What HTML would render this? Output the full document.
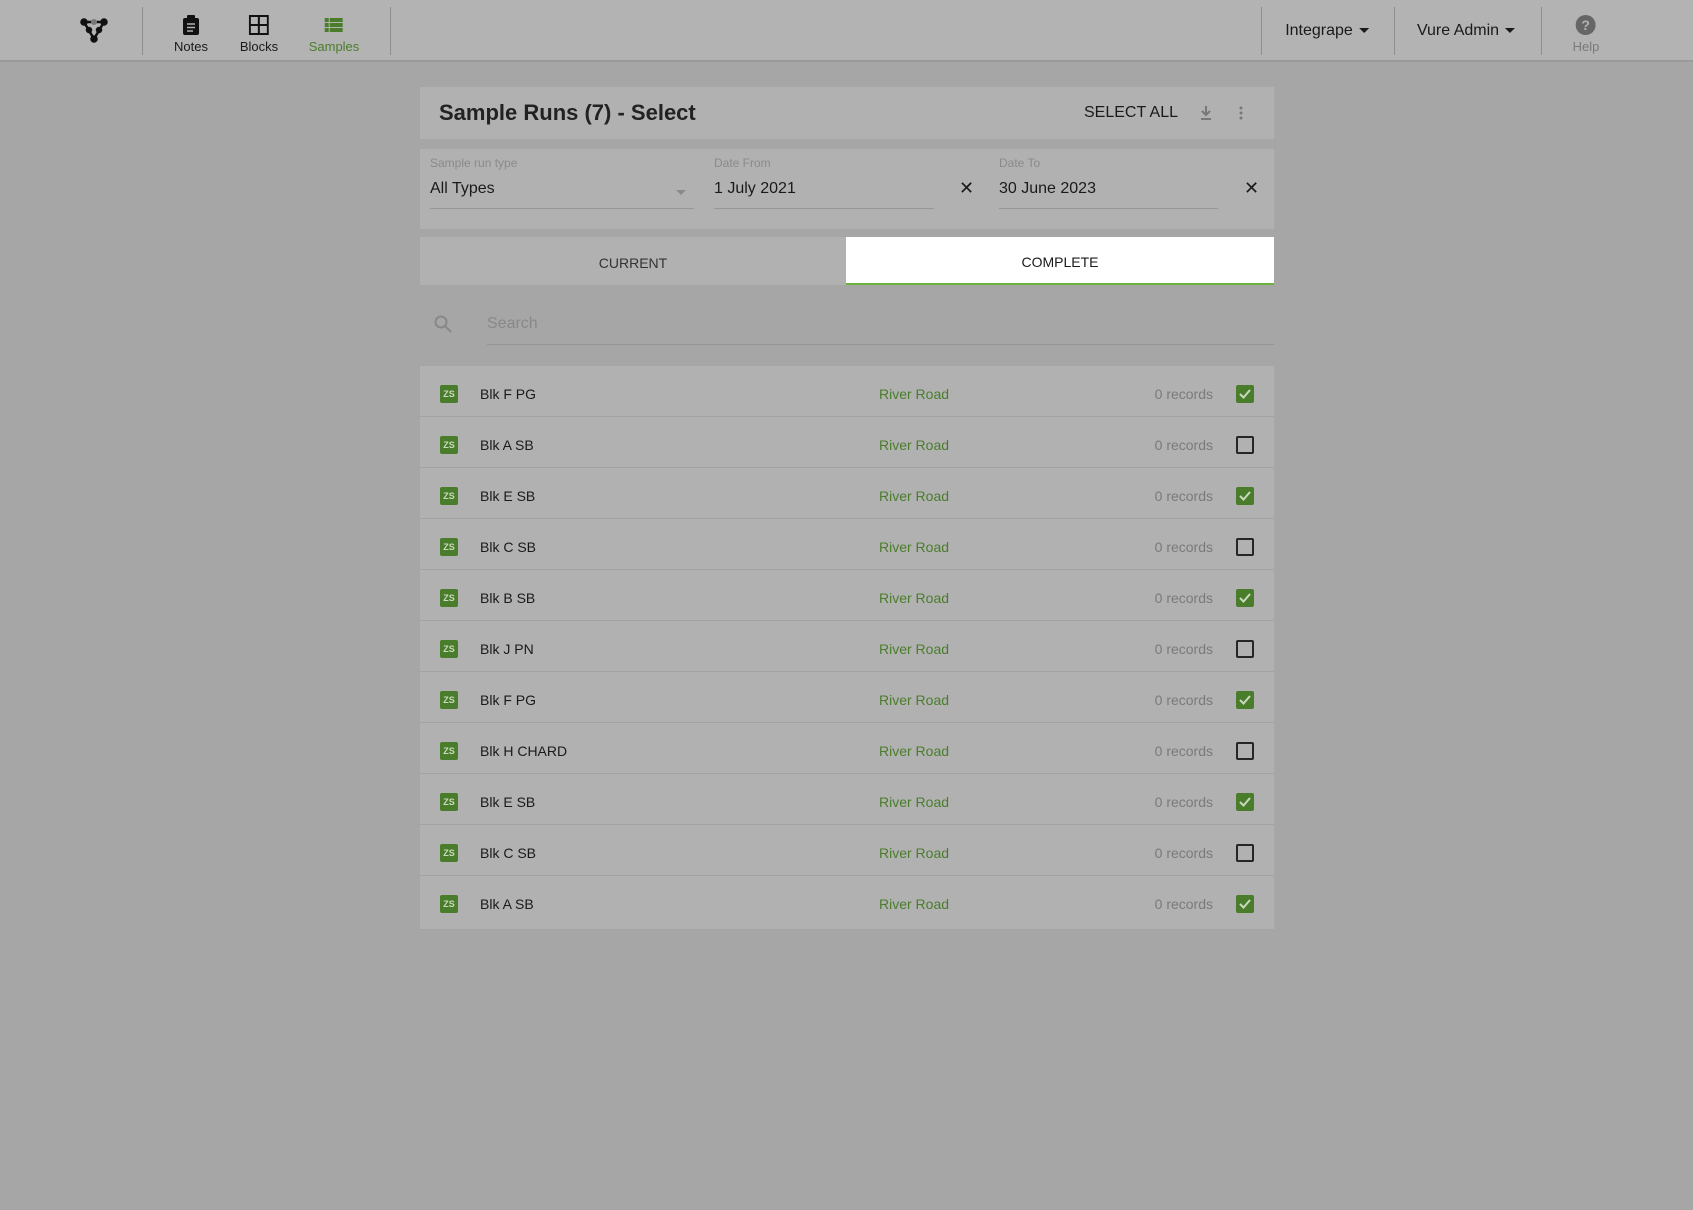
<!DOCTYPE html>
<html><head><meta charset="utf-8"><style>
*{box-sizing:border-box;margin:0;padding:0}
body{width:1693px;height:1210px;background:#a6a6a6;font-family:"Liberation Sans",sans-serif;position:relative;overflow:hidden;color:#1a1a1a}
div{white-space:nowrap}
.nav{position:absolute;left:0;top:0;width:1693px;height:62px;background:#b3b3b3;border-bottom:2px solid #9a9a9a}
.vd{position:absolute;top:7px;height:48px;width:1px;background:#8e8e8e}
.ni{position:absolute;top:15px;text-align:center;font-size:13px;transform:translateX(-50%)}
.ni svg{display:block;margin:0 auto 4px}
.dd{position:absolute;top:22px;font-size:16px;transform:translateX(-50%)}
.dd:after{content:"";display:inline-block;margin-left:6px;vertical-align:middle;border-left:5px solid transparent;border-right:5px solid transparent;border-top:5px solid #1a1a1a}
.card{position:absolute;left:420px;width:854px;background:#b1b1b1}
.lbl{position:absolute;top:156px;font-size:12px;color:#8a8a8a}
.val{position:absolute;top:180px;font-size:16px}
.ul{position:absolute;top:208px;height:1px;background:#979797}
.x{position:absolute;top:178px;font-size:18px}
.row{position:absolute;left:420px;width:854px;height:51px;background:#b1b1b1;border-bottom:1px solid #a3a3a3}
.zs{position:absolute;left:440px;width:18px;height:18px;background:#4a7d2b;color:#c9d9bd;font-size:9px;font-weight:bold;text-align:center;line-height:18px;border-radius:2px}
.nm{position:absolute;left:480px;font-size:14px;margin-top:1px}
.rr{position:absolute;left:879px;font-size:14px;color:#4a7d2b}
.rc{position:absolute;right:480px;font-size:14px;color:#7a7a7a}
.cb{position:absolute;left:1236px;width:18px;height:18px;border:2px solid #262626;border-radius:2px}
.cb.on{background:#4a7d2b;border-color:#4a7d2b}
.w{position:absolute;left:0;top:0;width:1693px;height:1210px}
</style></head><body>
<div class="nav">
<svg style="position:absolute;left:80px;top:17px" width="28" height="26" viewBox="0 0 28 26"><g stroke="#111" stroke-width="2.5" fill="#111"><line x1="4" y1="5" x2="14" y2="5"/><line x1="14" y1="5" x2="24" y2="5"/><line x1="4" y1="5" x2="14" y2="22"/><line x1="24" y1="5" x2="14" y2="22"/><circle cx="4" cy="5" r="2.5"/><circle cx="24" cy="5" r="2.5"/><circle cx="14" cy="22" r="2.5"/><circle cx="9" cy="13" r="2"/><circle cx="19" cy="13" r="2"/></g><circle cx="14" cy="5" r="3" fill="#777"/></svg>
<div class="vd" style="left:142px"></div>
<div class="ni" style="left:191px"><svg width="18" height="20" viewBox="0 0 18 20"><rect x="1" y="3" width="16" height="17" rx="2" fill="#111"/><rect x="5" y="0" width="8" height="5" rx="1" fill="#111"/><g stroke="#b3b3b3" stroke-width="1.5"><line x1="5" y1="9" x2="13" y2="9"/><line x1="5" y1="12.5" x2="13" y2="12.5"/><line x1="5" y1="16" x2="11" y2="16"/></g></svg>Notes</div>
<div class="ni" style="left:259px"><svg width="20" height="20" viewBox="0 0 20 20"><g fill="none" stroke="#111" stroke-width="2"><rect x="1" y="1" width="18" height="18"/><line x1="10" y1="1" x2="10" y2="19"/><line x1="1" y1="10" x2="19" y2="10"/></g></svg>Blocks</div>
<div class="ni" style="left:334px;color:#4a7d2b"><svg width="20" height="20" viewBox="0 0 20 20"><g fill="#4a7d2b"><rect x="1" y="3" width="4" height="4"/><rect x="6" y="3" width="13" height="4"/><rect x="1" y="8" width="4" height="4"/><rect x="6" y="8" width="13" height="4"/><rect x="1" y="13" width="4" height="4"/><rect x="6" y="13" width="13" height="4"/></g></svg>Samples</div>
<div class="vd" style="left:390px"></div>
<div class="vd" style="left:1261px"></div>
<div class="dd" style="left:1327px">Integrape</div>
<div class="vd" style="left:1394px"></div>
<div class="dd" style="left:1466px">Vure Admin</div>
<div class="vd" style="left:1541px"></div>
<div class="ni" style="left:1586px;color:#7a7a7a"><svg width="20" height="20" viewBox="0 0 20 20"><circle cx="10" cy="10" r="10" fill="#666"/><text x="10" y="15" font-size="14" font-weight="bold" text-anchor="middle" fill="#b3b3b3" font-family="Liberation Sans">?</text></svg>Help</div>
</div>

<div class="card" style="top:87px;height:52px"></div>
<div style="position:absolute;left:439px;top:100px;font-size:22px;font-weight:bold;color:#222">Sample Runs (7) - Select</div>
<div style="position:absolute;left:1084px;top:104px;font-size:16px">SELECT ALL</div>
<svg style="position:absolute;left:1199px;top:105px" width="14" height="16" viewBox="0 0 14 16"><path d="M7 1v9M3 6l4 4 4-4" stroke="#777" stroke-width="2" fill="none"/><line x1="2" y1="14" x2="12" y2="14" stroke="#777" stroke-width="2"/></svg>
<svg style="position:absolute;left:1238px;top:105px" width="6" height="16"><circle cx="3" cy="3" r="1.5" fill="#777"/><circle cx="3" cy="8" r="1.5" fill="#777"/><circle cx="3" cy="13" r="1.5" fill="#777"/></svg>

<div class="card" style="top:149px;height:80px"></div>
<div class="lbl" style="left:430px">Sample run type</div>
<div class="val" style="left:430px">All Types</div>
<div style="position:absolute;left:676px;top:190px;border-left:5px solid transparent;border-right:5px solid transparent;border-top:5px solid #8a8a8a"></div>
<div class="ul" style="left:430px;width:264px"></div>
<div class="lbl" style="left:714px">Date From</div>
<div class="val" style="left:714px">1 July 2021</div>
<div class="ul" style="left:714px;width:220px"></div>
<div class="x" style="left:959px">✕</div>
<div class="lbl" style="left:999px">Date To</div>
<div class="val" style="left:999px">30 June 2023</div>
<div class="ul" style="left:999px;width:219px"></div>
<div class="x" style="left:1244px">✕</div>

<div class="card" style="top:237px;height:48px;width:426px"></div>
<div style="position:absolute;left:420px;top:255px;width:426px;text-align:center;font-size:14px;color:#333">CURRENT</div>
<div style="position:absolute;left:846px;top:237px;width:428px;height:48px;background:#fff;border-bottom:2px solid #6ab23a;text-align:center;font-size:14px;padding-top:17px">COMPLETE</div>

<svg style="position:absolute;left:434px;top:315px" width="18" height="18" viewBox="0 0 18 18"><circle cx="7" cy="7" r="5.5" stroke="#888" stroke-width="2" fill="none"/><line x1="11" y1="11" x2="17" y2="17" stroke="#888" stroke-width="2"/></svg>
<div style="position:absolute;left:487px;top:315px;font-size:16px;color:#888">Search</div>
<div style="position:absolute;left:487px;top:344px;width:787px;height:1px;background:#959595"></div>

<div class="row" style="top:366px"></div><div class="row" style="top:417px"></div><div class="row" style="top:468px"></div><div class="row" style="top:519px"></div><div class="row" style="top:570px"></div><div class="row" style="top:621px"></div><div class="row" style="top:672px"></div><div class="row" style="top:723px"></div><div class="row" style="top:774px"></div><div class="row" style="top:825px"></div><div class="row" style="top:876px;height:54px"></div>

<div class="w">
<div class="zs" style="top:385px">ZS</div><div class="nm" style="top:385px">Blk F PG</div><div class="rr" style="top:386px">River Road</div><div class="rc" style="top:386px">0 records</div><div class="cb on" style="top:385px"><svg width="14" height="14" viewBox="0 0 14 14"><path d="M2 7l3.5 3.5L12 3" stroke="#c9d9bd" stroke-width="2" fill="none"/></svg></div>
<div class="zs" style="top:436px">ZS</div><div class="nm" style="top:436px">Blk A SB</div><div class="rr" style="top:437px">River Road</div><div class="rc" style="top:437px">0 records</div><div class="cb" style="top:436px"></div>
<div class="zs" style="top:487px">ZS</div><div class="nm" style="top:487px">Blk E SB</div><div class="rr" style="top:488px">River Road</div><div class="rc" style="top:488px">0 records</div><div class="cb on" style="top:487px"><svg width="14" height="14" viewBox="0 0 14 14"><path d="M2 7l3.5 3.5L12 3" stroke="#c9d9bd" stroke-width="2" fill="none"/></svg></div>
<div class="zs" style="top:538px">ZS</div><div class="nm" style="top:538px">Blk C SB</div><div class="rr" style="top:539px">River Road</div><div class="rc" style="top:539px">0 records</div><div class="cb" style="top:538px"></div>
<div class="zs" style="top:589px">ZS</div><div class="nm" style="top:589px">Blk B SB</div><div class="rr" style="top:590px">River Road</div><div class="rc" style="top:590px">0 records</div><div class="cb on" style="top:589px"><svg width="14" height="14" viewBox="0 0 14 14"><path d="M2 7l3.5 3.5L12 3" stroke="#c9d9bd" stroke-width="2" fill="none"/></svg></div>
<div class="zs" style="top:640px">ZS</div><div class="nm" style="top:640px">Blk J PN</div><div class="rr" style="top:641px">River Road</div><div class="rc" style="top:641px">0 records</div><div class="cb" style="top:640px"></div>
<div class="zs" style="top:691px">ZS</div><div class="nm" style="top:691px">Blk F PG</div><div class="rr" style="top:692px">River Road</div><div class="rc" style="top:692px">0 records</div><div class="cb on" style="top:691px"><svg width="14" height="14" viewBox="0 0 14 14"><path d="M2 7l3.5 3.5L12 3" stroke="#c9d9bd" stroke-width="2" fill="none"/></svg></div>
<div class="zs" style="top:742px">ZS</div><div class="nm" style="top:742px">Blk H CHARD</div><div class="rr" style="top:743px">River Road</div><div class="rc" style="top:743px">0 records</div><div class="cb" style="top:742px"></div>
<div class="zs" style="top:793px">ZS</div><div class="nm" style="top:793px">Blk E SB</div><div class="rr" style="top:794px">River Road</div><div class="rc" style="top:794px">0 records</div><div class="cb on" style="top:793px"><svg width="14" height="14" viewBox="0 0 14 14"><path d="M2 7l3.5 3.5L12 3" stroke="#c9d9bd" stroke-width="2" fill="none"/></svg></div>
<div class="zs" style="top:844px">ZS</div><div class="nm" style="top:844px">Blk C SB</div><div class="rr" style="top:845px">River Road</div><div class="rc" style="top:845px">0 records</div><div class="cb" style="top:844px"></div>
<div class="zs" style="top:895px">ZS</div><div class="nm" style="top:895px">Blk A SB</div><div class="rr" style="top:896px">River Road</div><div class="rc" style="top:896px">0 records</div><div class="cb on" style="top:895px"><svg width="14" height="14" viewBox="0 0 14 14"><path d="M2 7l3.5 3.5L12 3" stroke="#c9d9bd" stroke-width="2" fill="none"/></svg></div>
</div>
</body></html>
